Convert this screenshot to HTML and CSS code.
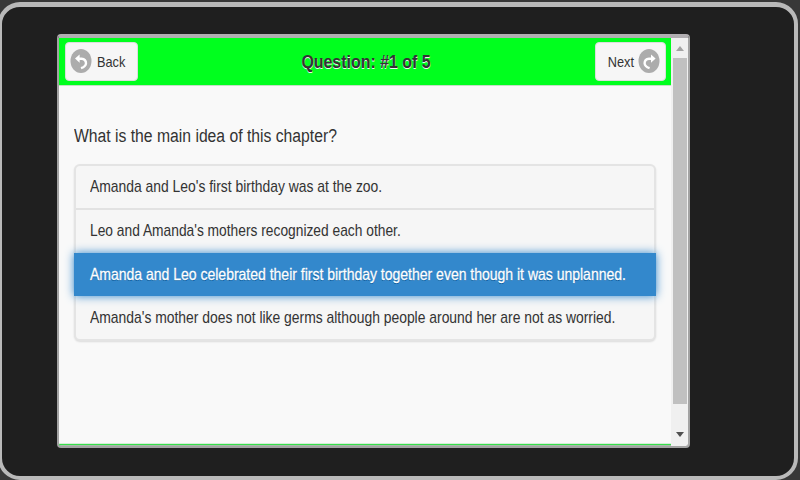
FILE: index.html
```
<!DOCTYPE html>
<html lang="en">
  <head>
    <meta charset="UTF-8" />
    <meta name="viewport" content="width=device-width, initial-scale=1.0" />
    <title>Quiz</title>
    <link rel="stylesheet" href="styles.css">
  </head>
  <body>
    <div class="device">
      <div class="screen">
        <div class="page">
          <header class="header">
            <button class="btn">
              <svg class="icon" viewBox="0 0 22 24">
                <ellipse cx="11" cy="12" rx="10.5" ry="12" />
                <path class="head" d="M5 9.6 L9.6 5.4 V13.8 Z" />
                <path class="arc" d="M8.5 9.7 H11.5 Q16 10.2 16 14.2 Q15.8 17.6 11 19.2" />
              </svg>
              <span class="label">Back</span>
            </button>
            <h1 class="title"><span>Question: #1 of 5</span></h1>
            <button class="btn next">
              <span class="label">Next</span>
              <svg class="icon" viewBox="0 0 22 24">
                <ellipse cx="11" cy="12" rx="10.5" ry="12" />
                <path class="head" d="M17.6 9.6 L13 5.4 V13.8 Z" />
                <path class="arc" d="M14 9.7 H11 Q6.6 10.2 6.6 14.2 Q6.8 17.6 11.6 19.2" />
              </svg>
            </button>
          </header>

          <main class="content">
            <p class="question"><span>What is the main idea of this chapter?</span></p>
            <ul class="answers">
              <li><span>Amanda and Leo's first birthday was at the zoo.</span></li>
              <li><span>Leo and Amanda's mothers recognized each other.</span></li>
              <li class="active"><span>Amanda and Leo celebrated their first birthday together even though it was unplanned.</span></li>
              <li><span>Amanda's mother does not like germs although people around her are not as worried.</span></li>
            </ul>
          </main>
          <div class="footer"></div>
        </div>

        <div class="scrollbar">
          <div class="arrow up"></div>
          <div class="thumb"></div>
          <div class="arrow down"></div>
        </div>
      </div>
    </div>
  </body>
</html>
```
FILE: styles.css
```
* {
  box-sizing: border-box;
}

body {
  margin: 0;
  height: 480px;
  overflow: hidden;
  padding-top: 2px;
  background-color: #383838;
  font-family: "Liberation Sans", Arial, sans-serif;
  color: #333;
}

.device {
  width: 800px;
  height: 478px;
  margin-left: -2px;
  padding: 28px 0 0 55px;
  background-color: #1f1f1f;
  border: 4px solid #b9b9b9;
  border-top-width: 5px;
  border-radius: 22px;
}

.screen {
  display: flex;
  width: 633px;
  height: 414px;
  margin-top: -1px;
  overflow: hidden;
  border: 2px solid #a3a3a3;
  border-top: 4px solid #b0adb0;
  border-radius: 4px;
}

.page {
  display: flex;
  flex-direction: column;
  width: 612px;
  background-color: #f9f9f9;
}

.header {
  display: flex;
  justify-content: space-between;
  height: 48px;
  padding: 4px 5px 4px 6px;
  background-color: #00ff1e;
  border-bottom: 1px solid #c5dfc5;
}

.btn {
  display: flex;
  align-items: center;
  gap: 3px;
  width: 73px;
  height: 39px;
  padding: 0 4px 1px;
  background-color: #f6f6f6;
  border: 1px solid #ddd;
  border-radius: 4px;
  font-family: inherit;
  font-size: 14.5px;
  color: #333;
}

.btn.next {
  width: 71px;
  padding: 0 5px 1px;
  gap: 2px;
  justify-content: flex-end;
}

.label {
  display: inline-block;
  padding-top: 2px;
  transform: scaleX(0.88);
}

.icon {
  width: 22px;
  height: 24px;
  flex: none;
}

.icon ellipse {
  fill: #acacac;
}

.icon .head {
  fill: #fff;
}

.icon .arc {
  fill: none;
  stroke: #fff;
  stroke-width: 2.4;
}

.title {
  margin: 0 2px 0 0;
  font-size: 17.5px;
  line-height: 41px;
  text-shadow: 0 1px 0 #f3f3f3;
}

.title span {
  display: inline-block;
  transform: scaleX(0.91);
}

.content {
  flex: 1;
  padding: 38px 15px 0 15px;
}

.question {
  margin: 0;
  font-size: 18px;
  line-height: 24px;
  white-space: nowrap;
}

.question span,
.answers span {
  display: inline-block;
  transform: scaleX(0.873);
  transform-origin: left center;
}

.answers {
  height: 177px;
  margin: 16px 0 0;
  padding: 0;
  list-style: none;
  background-color: #f6f6f6;
  border: 2px solid #e4e4e4;
  border-radius: 6px;
  box-shadow: 0 1px 2px rgba(0, 0, 0, 0.12);
}

.answers li {
  height: 44px;
  padding-left: 14px;
  border-bottom: 2px solid #e2e2e2;
  font-size: 17px;
  line-height: 41px;
  white-space: nowrap;
  text-shadow: 0 1px 0 #f3f3f3;
}

.answers li span {
  transform: scaleX(0.817);
}

.answers li:nth-child(2),
.answers li:last-child {
  height: 43px;
  border-bottom: none;
}

.answers li:nth-child(2) span {
  transform: scaleX(0.811);
}

.answers li:last-child {
  line-height: 44px;
}

.answers .active {
  position: relative;
  height: 43px;
  margin: 0 -2px;
  padding-left: 16px;
  background-color: #3388cc;
  border: none;
  box-shadow: 0 0 9px #3388cc;
  color: #fff;
  line-height: 43px;
  text-shadow: 0 1px 0 #005599;
  -webkit-text-stroke: 0.3px #fff;
}

.answers li.active span {
  transform: scaleX(0.823);
}

.footer {
  height: 3px;
  background-color: #36df4a;
  border-top: 1px solid #d5eed7;
  border-bottom: 1px solid #a4bca6;
}

.scrollbar {
  display: flex;
  flex-direction: column;
  align-items: center;
  width: 17px;
  background-color: #f0f0f0;
}

.thumb {
  width: 14px;
  height: 346px;
  margin-left: 1px;
  background-color: #c0c0c0;
}

.arrow {
  border: 4px solid transparent;
  border-top: none;
}

.arrow.up {
  margin: 8px 0 7px 1px;
  border-bottom: 5px solid #a3a3a3;
}

.arrow.down {
  margin: 28px 0 0 1px;
  border-bottom: none;
  border-top: 5px solid #505050;
}
```
